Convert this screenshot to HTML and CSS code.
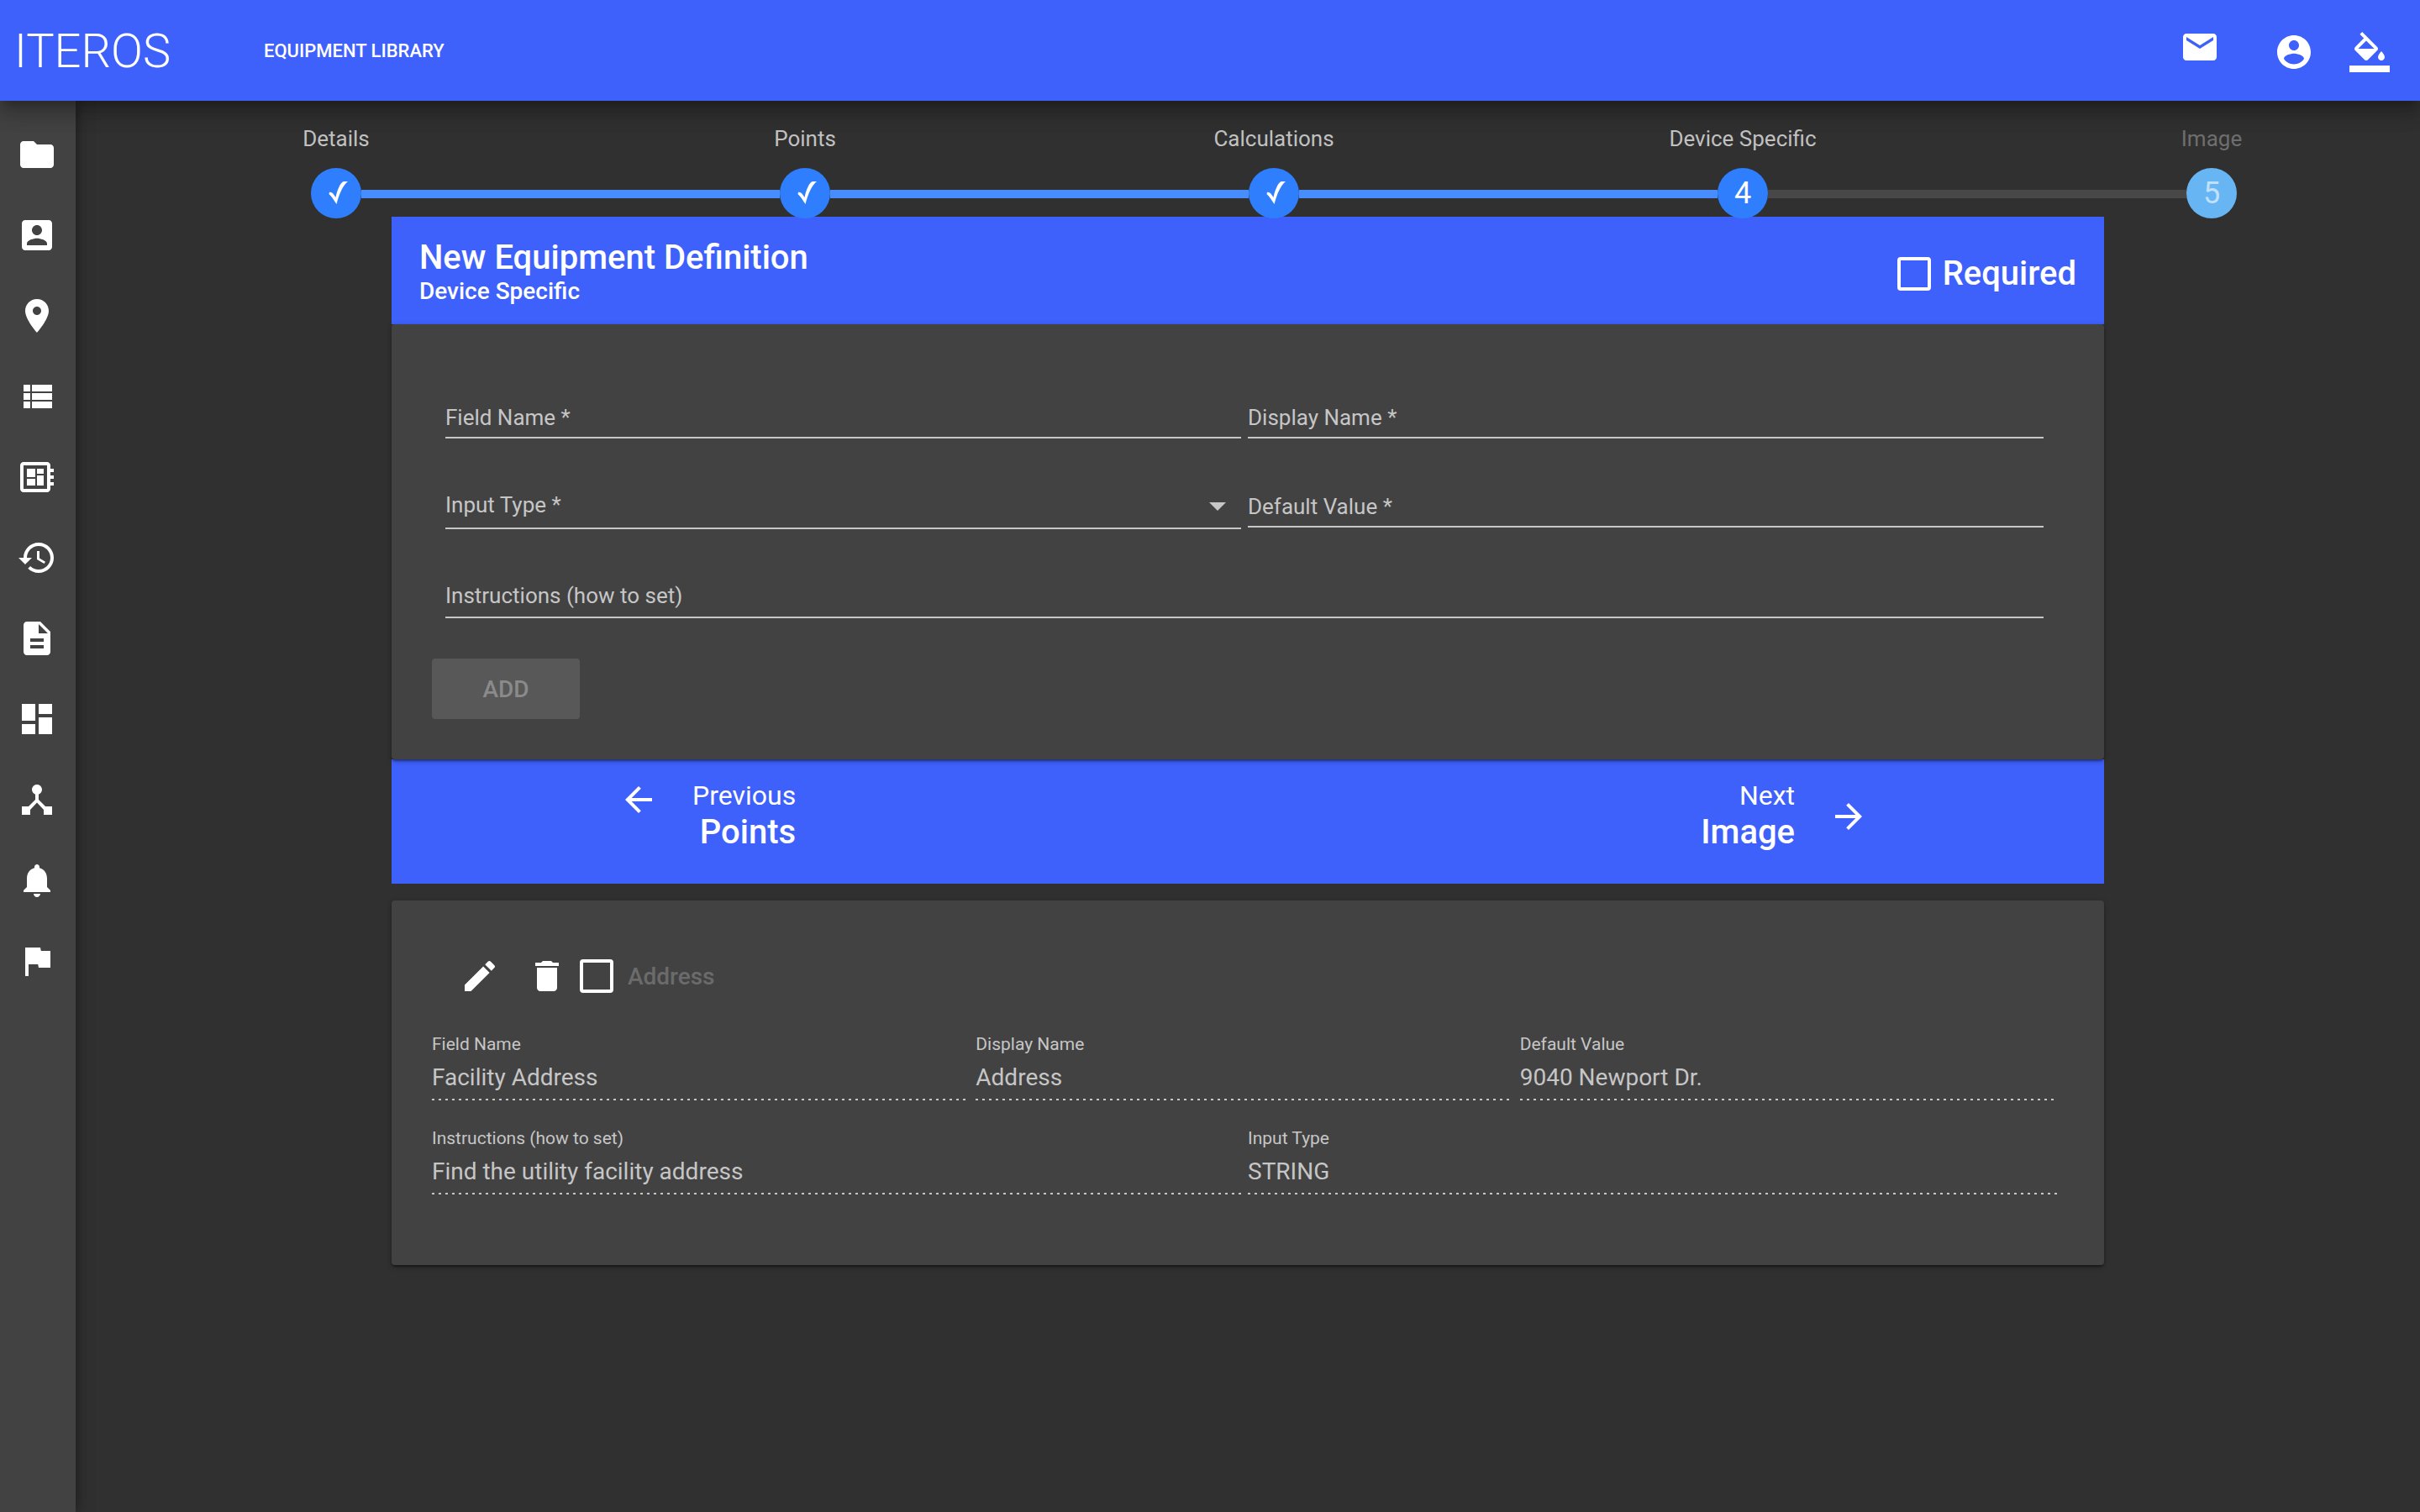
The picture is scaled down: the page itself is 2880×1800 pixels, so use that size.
FILE: index.html
```html
<!DOCTYPE html>
<html lang="en">
<head>
<meta charset="utf-8">
<meta name="viewport" content="width=device-width, initial-scale=1">
<title>Iteros – Equipment Library</title>
<link rel="stylesheet" href="styles.css">
</head>
<body>
<header class="topbar">
  <a class="logo" href="#">ITEROS</a>
  <a class="section-link" href="#">EQUIPMENT LIBRARY</a>
  <div class="topbar-actions">
    <button class="icon-button mail" type="button" aria-label="Messages"><svg class="icon" viewBox="0 0 24 24"><path d="M20 4H4c-1.100 0-1.990.9-1.990 2L2 18c0 1.100.9 2 2 2h16c1.100 0 2-.9 2-2V6c0-1.100-.9-2-2-2zm0 4l-8 5-8-5V6l8 5 8-5v2z"/></svg></button>
    <button class="icon-button" type="button" aria-label="Account"><svg class="icon" viewBox="0 0 24 24"><path d="M12 2C6.480 2 2 6.480 2 12s4.480 10 10 10 10-4.480 10-10S17.520 2 12 2zm0 3c1.660 0 3 1.340 3 3s-1.340 3-3 3-3-1.340-3-3 1.340-3 3-3zm0 14.200c-2.500 0-4.710-1.280-6-3.220.03-1.990 4-3.080 6-3.080 1.990 0 5.970 1.090 6 3.080-1.290 1.940-3.500 3.220-6 3.220z"/></svg></button>
    <button class="icon-button theme" type="button" aria-label="Theme colour"><svg class="icon" viewBox="0 0 24 24"><path d="M16.560 8.940L7.620 0 6.210 1.410l2.380 2.380-5.150 5.150c-.59.59-.59 1.540 0 2.120l5.500 5.500c.29.29.68.44 1.060.44s.77-.15 1.060-.44l5.500-5.500c.59-.58.59-1.530 0-2.120zM5.210 10L10 5.210 14.790 10H5.210zM19 11.500s-2 2.170-2 3.500c0 1.100.9 2 2 2s2-.9 2-2c0-1.330-2-3.500-2-3.500zM0 20h24v4H0z"/></svg></button>
  </div>
</header>

<div class="shell">
  <nav class="sidebar" aria-label="Main">
    <a href="#" aria-label="Projects"><svg class="icon" viewBox="0 0 24 24"><path d="M10 4H4c-1.100 0-1.990.9-1.990 2L2 18c0 1.100.9 2 2 2h16c1.100 0 2-.9 2-2V8c0-1.100-.9-2-2-2h-8l-2-2z"/></svg></a>
    <a href="#" aria-label="Contacts"><svg class="icon" viewBox="0 0 24 24"><path d="M3 5v14c0 1.100.89 2 2 2h14c1.100 0 2-.9 2-2V5c0-1.100-.9-2-2-2H5c-1.110 0-2 .9-2 2zm12 4c0 1.660-1.340 3-3 3s-3-1.340-3-3 1.340-3 3-3 3 1.340 3 3zm-9 8c0-2 4-3.100 6-3.100s6 1.100 6 3.100v1H6v-1z"/></svg></a>
    <a href="#" aria-label="Locations"><svg class="icon" viewBox="0 0 24 24"><path d="M12 2C8.130 2 5 5.130 5 9c0 5.250 7 13 7 13s7-7.750 7-13c0-3.870-3.130-7-7-7zm0 9.500c-1.380 0-2.500-1.120-2.500-2.500s1.120-2.500 2.500-2.500 2.500 1.120 2.500 2.500-1.120 2.500-2.500 2.500z"/></svg></a>
    <a href="#" aria-label="Lists"><svg class="icon" viewBox="0 0 24 24"><path d="M4 14h4v-4H4v4zm0 5h4v-4H4v4zM4 9h4V5H4v4zm5 5h12v-4H9v4zm0 5h12v-4H9v4zM9 5v4h12V5H9z"/></svg></a>
    <a href="#" aria-label="Equipment"><svg class="icon" viewBox="0 0 24 24"><path d="M22 9V7h-2V5c0-1.100-.9-2-2-2H4c-1.100 0-2 .9-2 2v14c0 1.100.9 2 2 2h14c1.100 0 2-.9 2-2v-2h2v-2h-2v-2h2v-2h-2V9h2zm-4 10H4V5h14v14zM6 13h5v4H6zm6-6h4v3h-4zM6 7h5v5H6zm6 4h4v6h-4z"/></svg></a>
    <a href="#" aria-label="History"><svg class="icon" viewBox="0 0 24 24"><path d="M13 3c-4.970 0-9 4.030-9 9H1l3.890 3.890.07.14L9 12H6c0-3.870 3.130-7 7-7s7 3.130 7 7-3.130 7-7 7c-1.930 0-3.680-.79-4.940-2.060l-1.420 1.420C8.270 19.990 10.510 21 13 21c4.970 0 9-4.030 9-9s-4.030-9-9-9zm-1 5v5l4.280 2.540.72-1.210-3.500-2.080V8H12z"/></svg></a>
    <a href="#" aria-label="Documents"><svg class="icon" viewBox="0 0 24 24"><path d="M14 2H6c-1.100 0-1.990.9-1.990 2L4 20c0 1.100.89 2 1.990 2H18c1.100 0 2-.9 2-2V8l-6-6zm2 16H8v-2h8v2zm0-4H8v-2h8v2zm-3-5V3.500L18.500 9H13z"/></svg></a>
    <a href="#" aria-label="Dashboard"><svg class="icon" viewBox="0 0 24 24"><path d="M3 13h8V3H3v10zm0 8h8v-6H3v6zm10 0h8V11h-8v10zm0-18v6h8V3h-8z"/></svg></a>
    <a href="#" aria-label="Network"><svg class="icon" viewBox="0 0 24 24"><path d="M17 16l-4-4V8.820C14.160 8.400 15 7.300 15 6c0-1.660-1.340-3-3-3S9 4.340 9 6c0 1.300.84 2.400 2 2.820V12l-4 4H3v5h5v-3.050l4-4.200 4 4.200V21h5v-5h-4z"/></svg></a>
    <a href="#" aria-label="Notifications"><svg class="icon" viewBox="0 0 24 24"><path d="M12 22c1.100 0 2-.9 2-2h-4c0 1.100.89 2 2 2zm6-6v-5c0-3.070-1.640-5.640-4.500-6.320V4c0-.83-.67-1.500-1.500-1.500s-1.500.67-1.500 1.500v.68C7.630 5.360 6 7.920 6 11v5l-2 2v1h16v-1l-2-2z"/></svg></a>
    <a href="#" aria-label="Flags"><svg class="icon" viewBox="0 0 24 24"><path d="M14.400 6L14 4H5v17h2v-7h5.600l.4 2h7V6z"/></svg></a>
  </nav>

  <main class="content">
    <ol class="stepper">
      <li class="step"><span class="step-label">Details</span><span class="step-dot"><svg class="check" viewBox="0 0 60 60"><path d="M22 29C25 28 27 31 29.500 35C31 27 35 17 39 16L44 16C38 21 34 30 30.500 43C27 38 25 34 21.500 31Z"/></svg></span></li>
      <li class="bar" aria-hidden="true"></li>
      <li class="step"><span class="step-label">Points</span><span class="step-dot"><svg class="check" viewBox="0 0 60 60"><path d="M22 29C25 28 27 31 29.500 35C31 27 35 17 39 16L44 16C38 21 34 30 30.500 43C27 38 25 34 21.500 31Z"/></svg></span></li>
      <li class="bar" aria-hidden="true"></li>
      <li class="step"><span class="step-label">Calculations</span><span class="step-dot"><svg class="check" viewBox="0 0 60 60"><path d="M22 29C25 28 27 31 29.500 35C31 27 35 17 39 16L44 16C38 21 34 30 30.500 43C27 38 25 34 21.500 31Z"/></svg></span></li>
      <li class="bar" aria-hidden="true"></li>
      <li class="step" aria-current="step"><span class="step-label">Device Specific</span><span class="step-dot">4</span></li>
      <li class="bar pending" aria-hidden="true"></li>
      <li class="step pending"><span class="step-label">Image</span><span class="step-dot">5</span></li>
    </ol>

    <form class="wizard">
      <div class="card-head">
        <div>
          <h1 class="title">New Equipment Definition</h1>
          <p class="subtitle">Device Specific</p>
        </div>
        <label class="required"><input class="checkbox" type="checkbox">Required</label>
      </div>

      <div class="panel form-panel">
        <div class="fields">
          <div class="field">
            <label for="field-name">Field Name *</label>
            <input id="field-name" type="text">
          </div>
          <div class="field">
            <label for="display-name">Display Name *</label>
            <input id="display-name" type="text">
          </div>
          <div class="field select-field">
            <label for="input-type">Input Type *</label>
            <select id="input-type"><option value=""></option></select>
            <svg class="caret" viewBox="0 0 20 10"><path d="M0 0h20L10 10z"/></svg>
          </div>
          <div class="field">
            <label for="default-value">Default Value *</label>
            <input id="default-value" type="text">
          </div>
          <div class="field wide">
            <label for="instructions">Instructions (how to set)</label>
            <textarea id="instructions" rows="1"></textarea>
          </div>
        </div>
        <button class="add" type="button" disabled>ADD</button>
      </div>

      <div class="pager">
        <button class="pager-button previous" type="button">
          <svg class="icon" viewBox="0 0 24 24"><path d="M20 11H7.830l5.590-5.590L12 4l-8 8 8 8 1.410-1.410L7.830 13H20v-2z"/></svg>
          <span class="pager-text"><span class="direction">Previous</span><span class="target">Points</span></span>
        </button>
        <button class="pager-button" type="button">
          <span class="pager-text"><span class="direction">Next</span><span class="target">Image</span></span>
          <svg class="icon" viewBox="0 0 24 24"><path d="M12 4l-1.410 1.410L16.170 11H4v2h12.170l-5.580 5.590L12 20l8-8z"/></svg>
        </button>
      </div>
    </form>

    <section class="panel entry">
      <div class="entry-tools">
        <button class="icon-button" type="button" aria-label="Edit"><svg class="icon" viewBox="0 0 24 24"><path d="M3 17.250V21h3.750L17.810 9.940l-3.750-3.750L3 17.250zM20.710 7.040c.39-.39.39-1.020 0-1.410l-2.340-2.340c-.39-.39-1.020-.39-1.410 0l-1.830 1.830 3.750 3.750 1.830-1.830z"/></svg></button>
        <button class="icon-button delete" type="button" aria-label="Delete"><svg class="icon" viewBox="0 0 24 24"><path d="M6 19c0 1.100.9 2 2 2h8c1.100 0 2-.9 2-2V7H6v12zM19 4h-3.500l-1-1h-5l-1 1H5v2h14V4z"/></svg></button>
        <label class="entry-check"><input class="checkbox" type="checkbox" disabled>Address</label>
      </div>
      <div class="values thirds">
        <div class="value"><label for="v-field">Field Name</label><input id="v-field" type="text" value="Facility Address" disabled></div>
        <div class="value"><label for="v-display">Display Name</label><input id="v-display" type="text" value="Address" disabled></div>
        <div class="value"><label for="v-default">Default Value</label><input id="v-default" type="text" value="9040 Newport Dr." disabled></div>
      </div>
      <div class="values halves">
        <div class="value"><label for="v-instructions">Instructions (how to set)</label><input id="v-instructions" type="text" value="Find the utility facility address" disabled></div>
        <div class="value"><label for="v-type">Input Type</label><input id="v-type" type="text" value="STRING" disabled></div>
      </div>
    </section>
  </main>
</div>
</body>
</html>
```
FILE: styles.css
```css
:root {
  --primary: #3f61fb;
  --accent: #2f7efd;
  --surface: #424242;
  --muted: #c6c6c6;
}

* { box-sizing: border-box; }

body {
  margin: 0;
  min-height: 100vh;
  display: flex;
  flex-direction: column;
  background: #303030;
  color: #fff;
  font-family: Roboto, "Liberation Sans", sans-serif;
}

button, input, select, textarea {
  margin: 0;
  padding: 0;
  border: 0;
  border-radius: 0;
  background: none;
  color: inherit;
  font: inherit;
}

a { color: inherit; text-decoration: none; }

.icon {
  display: block;
  width: 48px;
  height: 48px;
  fill: #fff;
}

/* Top bar */
.topbar {
  position: relative;
  z-index: 2;
  display: flex;
  align-items: center;
  height: 120px;
  padding: 0 36px 0 17px;
  background: var(--primary);
  box-shadow: 0 10px 10px -6px rgba(0, 0, 0, .2), 0 16px 20px 2px rgba(0, 0, 0, .14), 0 6px 28px 4px rgba(0, 0, 0, .12);
}

.logo {
  width: 297px;
  padding-top: 2px;
  font-size: 56px;
  font-weight: 300;
}

.section-link {
  font-size: 22px;
  font-weight: 500;
}

.topbar-actions {
  display: flex;
  align-items: center;
  margin-left: auto;
  padding-top: 4px;
}

.mail {
  margin-right: 64px;
  padding-bottom: 12px;
}

.theme { margin-left: 42px; }

/* Side bar */
.shell {
  flex: 1;
  display: flex;
}

.sidebar {
  flex: none;
  display: flex;
  flex-direction: column;
  gap: 48px;
  width: 90px;
  padding: 40px 20px;
  background: var(--surface);
  box-shadow: 0 0 16px rgba(0, 0, 0, .5);
}

.content {
  flex: 1;
  min-width: 0;
  padding-top: 30px;
}

/* Stepper */
.stepper {
  position: relative;
  z-index: 1;
  display: flex;
  align-items: flex-end;
  margin: 0;
  padding: 0 calc(10% - 61px) 0 calc(10% + 1px);
  list-style: none;
}

.step {
  display: flex;
  flex-direction: column;
  align-items: center;
  gap: 20px;
  width: 60px;
}

.step-label {
  color: #c1c1c1;
  font-size: 26px;
  line-height: 30px;
  white-space: nowrap;
}

.step-dot {
  display: flex;
  align-items: center;
  justify-content: center;
  width: 60px;
  height: 60px;
  border-radius: 50%;
  background: var(--accent);
  font-size: 36px;
  line-height: 60px;
}

.check {
  width: 60px;
  height: 60px;
  fill: #fff;
}

.bar {
  flex: 1;
  height: 10px;
  margin-bottom: 24px;
  background: #488dfd;
}

.bar.pending { background: #484848; }
.pending .step-label { color: #6e6e6e; }
.pending .step-dot { background: #67b5f3; color: #c0e0fb; }

/* Wizard card */
.wizard, .entry {
  width: 73.05%;
  margin: 0 auto;
}

.wizard { margin-top: -2px; }

.card-head {
  display: flex;
  align-items: center;
  justify-content: space-between;
  padding: 25px 33px 23px;
  background: var(--primary);
}

.title {
  margin: 0;
  font-size: 40px;
  font-weight: 500;
  line-height: 48px;
}

.subtitle {
  margin: 0;
  font-size: 28px;
  font-weight: 500;
  line-height: 32px;
}

.checkbox {
  appearance: none;
  flex: none;
  width: 40px;
  height: 40px;
  border: 4px solid #fff;
  border-radius: 4px;
}

.required {
  display: flex;
  align-items: center;
  gap: 14px;
  padding-top: 6px;
  font-size: 40px;
  font-weight: 500;
  line-height: 48px;
}

.panel {
  border-radius: 4px;
  background: var(--surface);
  box-shadow: 0 4px 2px -2px rgba(0, 0, 0, .2), 0 2px 2px rgba(0, 0, 0, .14), 0 2px 6px rgba(0, 0, 0, .3);
}

.form-panel {
  position: relative;
  padding: 96px 48px 48px;
}

.fields {
  display: grid;
  grid-template-columns: 1fr 1fr;
  align-items: center;
  gap: 64px 8px;
  margin-bottom: 48px;
  padding: 0 24px 0 16px;
}

.field {
  display: grid;
  grid-template-columns: 1fr auto;
  height: 40px;
  border-bottom: 2px solid var(--muted);
  color: var(--muted);
  font-size: 26px;
  line-height: 30px;
}

.field label {
  grid-area: 1 / 1;
  pointer-events: none;
}

.field input, .field select, .field textarea {
  grid-area: 1 / 1 / 2 / 3;
  width: 100%;
  height: 30px;
  line-height: 30px;
  outline: 0;
  resize: none;
  appearance: none;
}

.select-field { height: 44px; }

.caret {
  grid-area: 1 / 2;
  width: 20px;
  height: 10px;
  margin: 12px 18px 0 0;
  fill: var(--muted);
  pointer-events: none;
}

.wide {
  grid-column: 1 / -1;
  height: 42px;
}

.add {
  display: block;
  width: 176px;
  height: 72px;
  border-radius: 4px;
  background: #585858;
  color: #8a8a8a;
  font-size: 28px;
  font-weight: 500;
}

/* Previous / next */
.pager {
  display: flex;
  align-items: flex-start;
  justify-content: space-between;
  padding: 24px 280px 36px 270px;
  background: var(--primary);
}

.pager-button {
  display: flex;
  align-items: center;
  gap: 40px;
}

.previous { align-items: flex-start; }

.pager-text {
  display: flex;
  flex-direction: column;
  align-items: flex-end;
}

.direction {
  font-size: 32px;
  line-height: 38px;
}

.target {
  font-size: 40px;
  font-weight: 500;
  line-height: 50px;
}

/* Saved entry */
.entry {
  margin-top: 20px;
  padding: 64px 48px 84px;
}

.entry-tools {
  display: flex;
  align-items: center;
  height: 52px;
  margin-bottom: 43px;
  padding-left: 33px;
}

.delete { margin: 0 15px 0 32px; }

.entry-check {
  display: flex;
  align-items: center;
  gap: 17px;
  color: #6b6b6b;
  font-size: 28px;
  font-weight: 500;
}

.values {
  display: grid;
  margin-bottom: 33px;
}

.values:last-child { margin-bottom: 0; }

.thirds {
  grid-template-columns: repeat(3, 1fr);
  column-gap: 11px;
  padding-right: 11px;
}

.halves {
  grid-template-columns: repeat(2, 1fr);
  column-gap: 7px;
  padding-right: 7px;
}

.value {
  display: flex;
  flex-direction: column;
  gap: 10px;
  padding-bottom: 9px;
  background: repeating-linear-gradient(to right, var(--muted) 0 3px, transparent 3px 8px) bottom / 100% 2px no-repeat;
  color: var(--muted);
}

.value label {
  font-size: 21px;
  line-height: 24px;
}

.value input {
  width: 100%;
  height: 36px;
  font-size: 28px;
  line-height: 36px;
}
```
